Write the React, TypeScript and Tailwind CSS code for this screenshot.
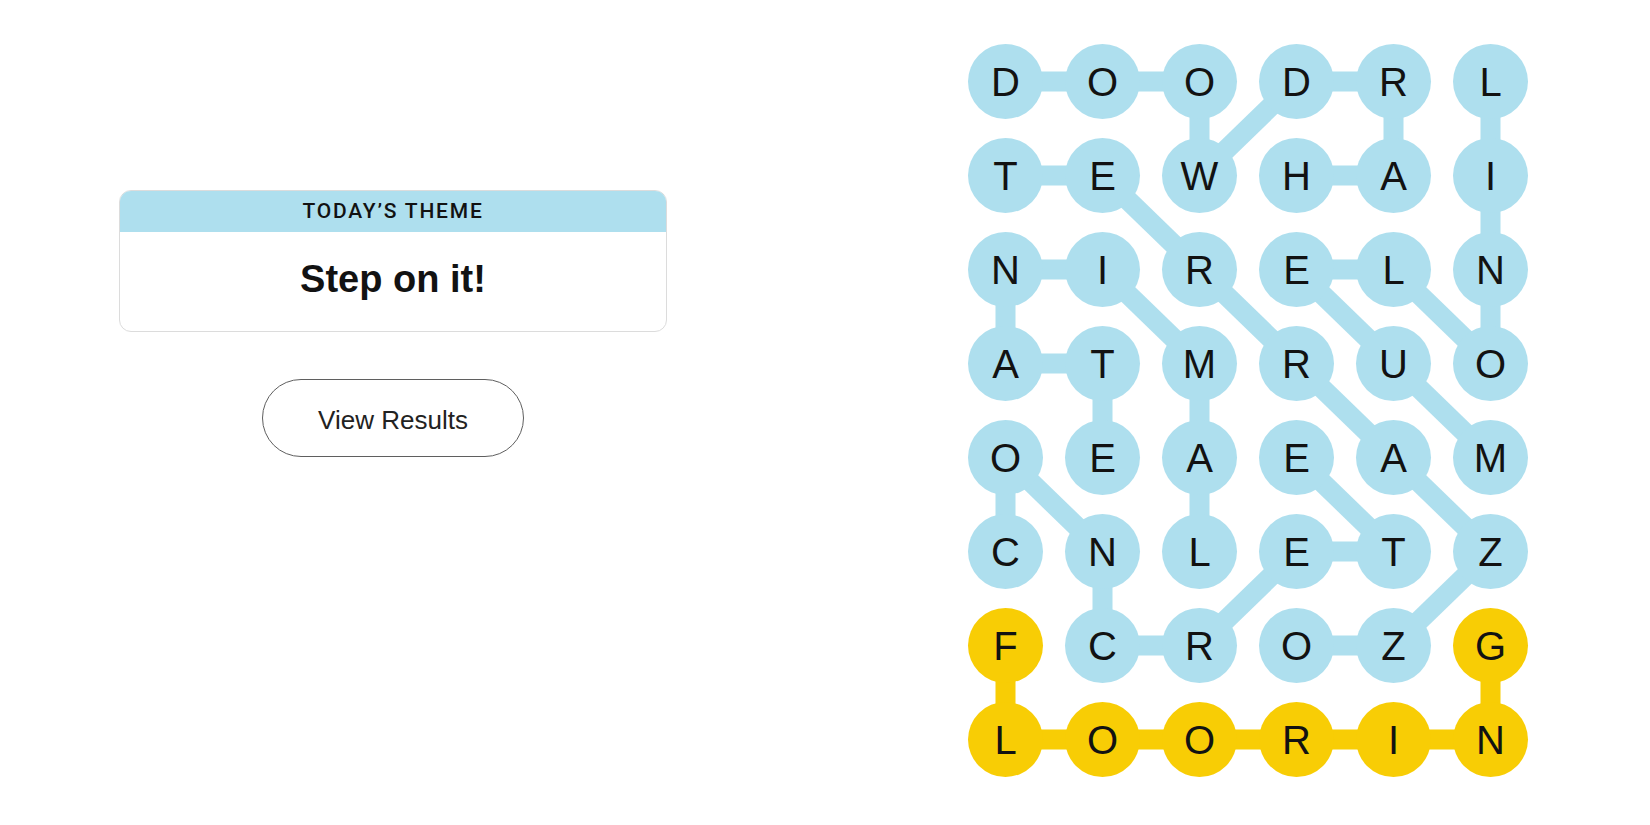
const BLUE = "#aedfee";
const YELLOW = "#f8cd05";

const GRID = [
  "DOODRL",
  "TEWHAI",
  "NIRELN",
  "ATMRUO",
  "OEAEAM",
  "CNLETZ",
  "FCROZG",
  "LOORIN",
];

type Cell = [number, number];

const WORDS: { path: Cell[]; spangram?: boolean }[] = [
  { path: [[1, 3], [1, 4], [0, 4], [0, 3], [1, 2], [0, 2], [0, 1], [0, 0]] },
  { path: [[0, 5], [1, 5], [2, 5], [3, 5], [2, 4], [2, 3], [3, 4], [4, 5]] },
  { path: [[1, 0], [1, 1], [2, 2], [3, 3], [4, 4], [5, 5], [6, 4], [6, 3]] },
  { path: [[5, 2], [4, 2], [3, 2], [2, 1], [2, 0], [3, 0], [3, 1], [4, 1]] },
  { path: [[5, 0], [4, 0], [5, 1], [6, 1], [6, 2], [5, 3], [5, 4], [4, 3]] },
  { path: [[6, 0], [7, 0], [7, 1], [7, 2], [7, 3], [7, 4], [7, 5], [6, 5]], spangram: true },
];

const SIZE = 75;
const COL = 97;
const ROW = 94;

const spangramCells = new Set(
  WORDS.filter((w) => w.spangram).flatMap((w) => w.path.map(([r, c]) => `${r}-${c}`))
);

function Connectors() {
  return (
    <svg className="absolute inset-0 pointer-events-none" width={560} height={733}>
      {WORDS.map((w, i) =>
        w.path.slice(1).map(([r, c], j) => {
          const [pr, pc] = w.path[j];
          return (
            <line
              key={`${i}-${j}`}
              x1={pc * COL + SIZE / 2}
              y1={pr * ROW + SIZE / 2}
              x2={c * COL + SIZE / 2}
              y2={r * ROW + SIZE / 2}
              stroke={w.spangram ? YELLOW : BLUE}
              strokeWidth={20}
            />
          );
        })
      )}
    </svg>
  );
}

function Board() {
  return (
    <div className="relative w-[560px] h-[733px]">
      <Connectors />
      <div className="relative grid grid-cols-6 gap-x-[22px] gap-y-[19px]">
        {GRID.flatMap((row, r) =>
          row.split("").map((letter, c) => (
            <div
              key={`${r}-${c}`}
              className={`w-[75px] h-[75px] rounded-full flex items-center justify-center text-[40px] leading-none text-[#121212] ${
                spangramCells.has(`${r}-${c}`) ? "bg-[#f8cd05]" : "bg-[#aedfee]"
              }`}
            >
              {letter}
            </div>
          ))
        )}
      </div>
    </div>
  );
}

export default function App() {
  return (
    <div
      className="w-[1650px] h-[825px] bg-white flex items-start justify-between pl-[119px] pr-[122px]"
      style={{ fontFamily: '"Liberation Sans", Arial, sans-serif' }}
    >
      <div className="pt-[190px] flex flex-col items-center">
        <div className="w-[548px] rounded-[12px] border border-[#dcdcdc] overflow-hidden">
          <div
            className="h-[41px] bg-[#aedfee] flex items-center justify-center text-[21px] font-medium tracking-[1.8px] text-[#121212]"
            style={{ fontFamily: "Roboto, sans-serif" }}
          >
            TODAY’S THEME
          </div>
          <div className="h-[99px] flex items-center justify-center pb-1 text-[38px] font-bold text-[#121212]">
            Step on it!
          </div>
        </div>
        <button className="mt-[47px] w-[262px] h-[78px] rounded-full border border-[#5f5f5f] bg-white pt-1 text-[26px] text-[#222]">
          View Results
        </button>
      </div>
      <div className="pt-[44px]">
        <Board />
      </div>
    </div>
  );
}
